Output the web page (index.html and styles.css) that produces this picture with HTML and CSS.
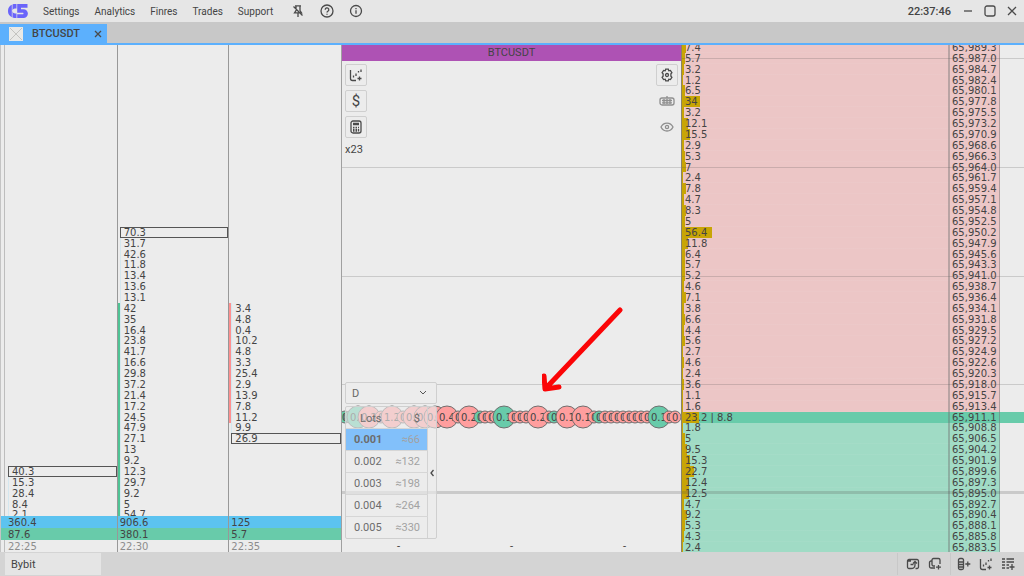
FILE: index.html
```html
<!DOCTYPE html>
<html lang="en">
<head>
<meta charset="utf-8">
<title>BTCUSDT</title>
<link rel="stylesheet" href="styles.css">
</head>
<body>
<header class="topbar">
  <svg class="logo" viewBox="0 0 20 14" width="20" height="14" aria-label="Logo">
    <path fill="#6a64fa" d="M8.500 0v4.500H7a2.500 2.500 0 0 0 0 5h1.500V14H6.500a5 5 0 0 1-2-.4V.4A6 6 0 0 1 8.500 0zM3.800 .8v12.400A6.800 6.800 0 0 1 0 7a6.800 6.800 0 0 1 3.800-6.200zM9.200 0h10.300v3.700H13v1.500h2.500a4.400 4.400 0 0 1 0 8.800H9.200v-3.700H15a.9.900 0 0 0 0-1.600H9.200z"/>
  </svg>
  <nav class="menu">
    <button>Settings</button>
    <button>Analytics</button>
    <button>Finres</button>
    <button>Trades</button>
    <button>Support</button>
  </nav>
  <div class="tools">
    <button aria-label="Unpin"><svg class="ico" viewBox="0 0 14 14" width="14" height="14"><path d="M4 1.800h6M5 2v4.500L3.500 8.800h7L9 6.500V2M7 9v4M2.500 2.500l9 9"/></svg></button>
    <button aria-label="Help"><svg class="ico" viewBox="0 0 14 14" width="14" height="14"><circle cx="7" cy="7" r="6"/><path d="M5.200 5.700a1.800 1.800 0 1 1 2.700 1.500c-.6.4-.9.700-.9 1.300M7 9.800v1"/></svg></button>
    <button aria-label="Info"><svg class="ico" viewBox="0 0 14 14" width="14" height="14"><circle cx="7" cy="7" r="5.500"/><path d="M7 6.300v3.500M7 4v1.200"/></svg></button>
  </div>
  <time class="clock">22:37:46</time>
  <div class="window-buttons">
    <button aria-label="Minimize"><svg class="ico" viewBox="0 0 12 12" width="12" height="12"><path d="M2 6h8"/></svg></button>
    <button aria-label="Maximize"><svg class="ico" viewBox="0 0 12 12" width="12" height="12"><rect x="1" y="1" width="10" height="10" rx="2"/></svg></button>
    <button aria-label="Close"><svg class="ico" viewBox="0 0 12 12" width="12" height="12"><path d="M2 2l8 8M10 2l-8 8"/></svg></button>
  </div>
</header>

<div class="tabs">
  <div class="tab">
    <svg viewBox="0 0 14 14" width="14" height="14"><rect width="14" height="14" fill="#e9e9e6"/><path d="M1 1l12 12M13 1L1 13" stroke="#c4c4c0"/></svg>
    <span>BTCUSDT</span>
    <button aria-label="Close tab"><svg class="ico" viewBox="0 0 8 8" width="8" height="8"><path d="M1 1l6 6M7 1L1 7"/></svg></button>
  </div>
</div>

<main class="workspace">
  <section class="clusters" id="clusters" aria-label="Clusters"></section>

  <section class="chart">
    <div class="rows" id="chart-rows"></div>
    <div class="chart-ui">
      <h1 class="symbol">BTCUSDT</h1>
      <div class="chart-tools">
        <div class="tool-col">
          <button class="tool boxed" aria-label="Add indicator"><svg class="ico" viewBox="0 0 14 14" width="14" height="14"><path d="M1.500 2v8.500a2 2 0 0 0 2 2H7M4.500 9.500v-2M7 8V5.500M9.500 4.500V3M12 4V1.500M10.500 8.500v4M8.500 10.500h4"/></svg></button>
          <button class="tool boxed dollar">$</button>
          <button class="tool boxed" aria-label="Calculator"><svg class="ico" viewBox="0 0 14 14" width="14" height="14"><rect x="2" y="1" width="10" height="12" rx="2"/><path d="M4 3.500h6M4 4.500h6M4 7.500h1.500M6.500 7.500H8M9 7.500h1M4 9.500h1.500M6.500 9.500H8M4 11h1.500M6.500 11H8M9.500 9v2.500"/></svg></button>
          <span class="leverage">x23</span>
        </div>
        <div class="tool-col">
          <button class="tool boxed" aria-label="Chart settings"><svg class="ico" viewBox="0 0 14 14" width="14" height="14"><path d="M5.700 1.200h2.600l.5 1.600 1.600-.4 1.500 2.300-1 1.100v2.400l1 1.100-1.500 2.300-1.600-.4-.5 1.600H5.700l-.5-1.600-1.600.4-1.500-2.300 1-1.100V5.800l-1-1.100 1.500-2.300 1.600.4z"/><circle cx="7" cy="7" r="1.500"/></svg></button>
          <button class="tool faint" aria-label="Hotkeys"><svg class="ico" viewBox="0 0 16 12" width="16" height="12"><rect x="1" y="3" width="14" height="7" rx="2"/><path d="M8 1v2M3 5.500h10M3 7.800h10M5 4v5M8 4v5M11 4v5"/></svg></button>
          <button class="tool faint" aria-label="Visibility"><svg class="ico" viewBox="0 0 16 12" width="16" height="12"><path d="M2 6c2.500-5.300 9.500-5.300 12 0-2.500 5.300-9.500 5.300-12 0z"/><circle cx="8" cy="6" r="1.600"/></svg></button>
        </div>
      </div>
      <svg class="arrow" viewBox="0 0 82 86" width="82" height="86"><path d="M78 3L4 81M2 69l1 13 14-2" fill="none" stroke="#fb0507" stroke-width="5" stroke-linecap="round" stroke-linejoin="round"/></svg>
      <div class="order-panel">
        <select class="preset" aria-label="Preset"><option>D</option></select>
        <div class="lots-box">
          <table class="lots">
            <thead><tr><th>Lots</th><th>$</th></tr></thead>
            <tbody>
              <tr class="active"><td>0.001</td><td>≈66</td></tr>
              <tr><td>0.002</td><td>≈132</td></tr>
              <tr><td>0.003</td><td>≈198</td></tr>
              <tr><td>0.004</td><td>≈264</td></tr>
              <tr><td>0.005</td><td>≈330</td></tr>
            </tbody>
          </table>
          <button class="collapse" aria-label="Collapse"><svg class="ico" viewBox="0 0 6 8" width="6" height="8"><path d="M4.500 1L2 4l2.500 3"/></svg></button>
        </div>
      </div>
      <div class="dashes"><span>-</span><span>-</span><span>-</span></div>
    </div>
  </section>

  <section class="book">
    <table class="rows" id="book-rows" aria-label="Order book"></table>
  </section>
</main>

<footer class="statusbar">
  <button class="exchange">Bybit</button>
  <div class="status-tools">
    <button aria-label="Add window"><svg class="ico" viewBox="0 0 14 14" width="14" height="14"><path d="M5 11.500H3A1.500 1.500 0 0 1 1.500 10V4A1.500 1.500 0 0 1 3 2.500h8A1.500 1.500 0 0 1 12.500 4v6a1.500 1.500 0 0 1-1.500 1.500H9.500M2 4h3M5 11.500c2.500 0 4-1 4-3.500M7 6.500l2-2 2 2M9 4.500V8M4.500 7.500h3"/></svg></button>
    <button aria-label="Add linked window"><svg class="ico" viewBox="0 0 14 14" width="14" height="14"><path d="M4 4V3a1.500 1.500 0 0 1 1.500-1.500h5A1.500 1.500 0 0 1 12 3v4M7 9H5.500A1.500 1.500 0 0 1 4 7.500V4H3a1.500 1.500 0 0 0-1.500 1.500v4A1.500 1.500 0 0 0 3 11h4M10.500 8v4.500M8 10.200h5"/></svg></button>
  </div>
  <div class="status-tools">
    <button aria-label="Add order book"><svg class="ico" viewBox="0 0 14 14" width="14" height="14"><rect x="1.500" y="1.500" width="5" height="11" rx="1.500"/><path d="M2 5h4M2 7.500h4M2 10h4M10.800 4.500v5M8.300 7h5"/></svg></button>
    <button aria-label="Add chart"><svg class="ico" viewBox="0 0 14 14" width="14" height="14"><path d="M1.500 2v8.500a2 2 0 0 0 2 2H7M4.500 9.500v-2M7 8V5.500M9.500 4.500V3M12 4V1.500M10.500 8.500v4M8.500 10.500h4"/></svg></button>
    <button aria-label="Add tape"><svg class="ico" viewBox="0 0 14 14" width="14" height="14"><path d="M1 2h3M5.500 2H13M1 5h3M5.500 5H13M1 8h3M5.500 8H8M1 11h3M5.500 11H8M11 7v6M8.500 10h5"/></svg></button>
  </div>
</footer>
<script src="app.js"></script>
</body>
</html>
```
FILE: styles.css
```css
* { box-sizing: border-box; }
body {
  margin: 0;
  min-height: 100vh;
  display: flex;
  flex-direction: column;
  background: #ececec;
  color: #444;
  font-family: Roboto, "Liberation Sans", sans-serif;
  font-size: 11px;
}
button {
  border: 0;
  padding: 0;
  background: none;
  color: inherit;
  font: inherit;
  display: inline-flex;
  align-items: center;
  justify-content: center;
}
.ico { fill: none; stroke: #4a4a4a; stroke-width: 1.3; display: block; }

.topbar {
  height: 22px;
  display: flex;
  align-items: center;
  padding: 0 6px 0 8px;
  background: #e6e6e6;
}
.menu { display: flex; gap: 15px; margin-left: 15px; font-size: 10px; }
.tools { display: flex; gap: 15px; margin-left: 18px; }
.clock { margin-left: auto; font-weight: 500; }
.window-buttons { display: flex; gap: 10px; margin-left: 11px; }

.tabs {
  height: 23px;
  display: flex;
  background: #c8c8c8;
  border-bottom: 2px solid #5cb0fd;
  padding-top: 2px;
}
.tab {
  display: flex;
  align-items: center;
  gap: 9px;
  padding: 0 5px 0 9px;
  background: #5cb0fd;
  font-weight: 500;
}
.tab button { margin-left: 5px; width: 8px; }

.workspace {
  flex: 1;
  display: grid;
  grid-template-columns: 341fr 340fr 343fr;
  min-height: 480px;
}
.workspace > section { position: relative; min-width: 0; overflow: hidden; }

.rows {
  position: absolute;
  inset: -3px 0 -1px;
  display: grid;
  grid-template-columns: minmax(0, 1fr);
  grid-template-rows: repeat(47, minmax(0, 1fr));
  font-family: "DejaVu Sans", sans-serif;
  font-size: 10px;
}
.row { position: relative; display: flex; align-items: center; white-space: nowrap; }
.row.line::after {
  content: "";
  position: absolute;
  inset: 50% 0 auto;
  height: 1px;
  background: rgba(80, 80, 80, .22);
}
.row.line.thick::after { inset: calc(50% - 2px) 0 auto; height: 3px; background: rgba(80, 80, 80, .22); }

.clusters {
  display: grid;
  grid-template-columns: repeat(3, minmax(0, 1fr));
  padding-left: 6px;
  background: linear-gradient(to right, #c4c4c4 1px, #ececec 1px, #ececec 4px, #bdbdbd 4px, #bdbdbd 5px, #ececec 5px);
}
.clusters::after {
  content: "";
  position: absolute;
  inset: auto auto 12px 1px;
  width: 5px;
  height: 24px;
  background: linear-gradient(#5cc3f0 50%, #68cbaa 50%);
}
.cluster { position: relative; border-right: 1px solid #989898; overflow: hidden; }
.cluster:last-child { border-right: 0; }
.cluster-row { display: flex; align-items: center; }
.cluster-row.empty { visibility: hidden; }
.cluster-row::before { content: ""; align-self: stretch; width: 2px; flex: none; }
.cluster-row.up::before { background: #4fc394; }
.cluster-row.down::before { background: #ff9090; }
.cluster-value {
  flex: 1;
  align-self: stretch;
  display: flex;
  align-items: center;
  padding-left: 3px;
  border-left: 1px solid #d4e7ef;
}
.cluster-row.peak .cluster-value { border: 1px solid #555; }
.cluster-foot {
  position: absolute;
  inset: auto 0 0;
  background: #ececec;
  font: 10px/14px "DejaVu Sans", sans-serif;
}
.cluster-foot div { height: 12px; padding-left: 2px; }
.total { background: #5cc3f0; }
.delta { background: #68cbaa; }
.stamp { color: #8c8c8c; }

.chart { border-left: 1px solid #a0a0a0; }
.chart-ui { position: relative; height: 100%; display: flex; flex-direction: column; }
.symbol {
  margin: 0;
  font-size: 11px;
  font-weight: 400;
  line-height: 16px;
  text-align: center;
  background: #ae52b4;
}
.chart-tools { display: flex; justify-content: space-between; padding: 3px 3px 0; }
.tool-col { display: flex; flex-direction: column; gap: 4px; }
.tool { width: 22px; height: 22px; }
.tool.boxed { border: 1px solid #cfcfcf; border-radius: 2px; }
.tool.faint .ico { stroke: #8e8e8e; }
.dollar { font-size: 15px; }
.leverage { line-height: 16px; }
.bubbles { display: block; flex: none; overflow: visible; }
.bubbles circle { stroke: #6f6f6f; stroke-width: 1; fill: #ff9e9e; }
.bubbles .buy { fill: #68cbaa; }
.bubbles text { fill: #444; font-size: 10px; }
.arrow { position: absolute; left: 59%; top: 262px; }

.order-panel { margin: auto 0 1px 3px; width: 92px; color: #6c6c6c; }
.preset {
  appearance: none;
  display: block;
  width: 100%;
  height: 22px;
  margin-bottom: 2px;
  padding: 0 6px;
  border: 1px solid #cfcfcf;
  border-radius: 2px;
  color: #666;
  font: inherit;
  background: #ececec url("data:image/svg+xml,%3Csvg xmlns='http://www.w3.org/2000/svg' width='8' height='6'%3E%3Cpath d='M1 1l3 3 3-3' fill='none' stroke='%23555'/%3E%3C/svg%3E") no-repeat right 9px center;
}
.lots-box {
  display: flex;
  border: 1px solid #cfcfcf;
  border-radius: 2px;
  background: rgba(236, 236, 236, .62);
}
.lots { flex: 1; border-collapse: collapse; border-right: 1px solid #d2d2d2; }
.lots th, .lots td { height: 22px; padding: 2px 7px 0 8px; border-bottom: 1px solid #d6d6d6; line-height: 16px; }
.lots th { font-weight: 400; padding: 4px 7px 0 14px; text-align: left; height: 21px; }
.lots td:last-child, .lots th:last-child { text-align: right; padding-left: 0; }
.lots td:last-child { color: #a2a2a2; }
.lots tr:last-child td { border-bottom: 0; }
.lots .active { background: #82c0fa; }
.lots .active td:first-child { font-weight: 700; }
.collapse { width: 8px; }
.dashes {
  display: flex;
  justify-content: space-around;
  font: 10px/12px "DejaVu Sans", sans-serif;
}

.book { border-left: 1px solid #8c8468; }
.book tbody { display: contents; }
.book .row { background: linear-gradient(#ecc6c6, #ecc6c6) no-repeat left / calc(100% - 24px) 100%; }
.book .row.bid { background-image: linear-gradient(#a0dbc5, #a0dbc5); }
.book .row.last { background: #68cbaa; }
.volume { position: relative; flex: 1; align-self: stretch; padding: 0 0 0 3px; display: flex; align-items: center; border-right: 2px solid rgba(110, 110, 110, .4); }
.volume i { position: absolute; inset: 0 auto 0 0; background: #c8a505; }
.volume span { position: relative; }
.price { align-self: stretch; display: flex; align-items: center; width: 50px; padding: 0 0 0 2px; border-right: 1px solid rgba(110, 110, 110, .45); margin-right: 24px; }

.statusbar { height: 24px; display: flex; align-items: center; background: #d4d4d4; padding: 1px 6px 1px 5px; }
.exchange { width: 96px; align-self: stretch; justify-content: flex-start; padding-left: 6px; background: #e5e5e5; margin-right: auto; }
.status-tools { display: flex; gap: 8px; padding: 0 8px; align-self: stretch; align-items: center; border-left: 1px solid #c8c8c8; }
.status-tools:last-child { padding: 0 3px 0 6px; }
```
FILE: app.js
```js
const ROWS = 47;
const TOP_PRICE = 65989.3;
const STEP = 2.3;
const LAST = 34;

const volumes = [7.4, 5.7, 3.2, 1.2, 6.5, 34, 3.2, 12.1, 15.5, 2.9, 5.3, 7, 2.4, 7.8, 4.7, 8.3, 5,
  56.4, 11.8, 6.4, 5.7, 5.2, 4.6, 7.1, 3.8, 6.6, 4.4, 5.6, 2.7, 4.6, 2.4, 3.6, 1.1, 1.6, "23.2 | 8.8",
  1.8, 5, 9.5, 15.3, 22.7, 12.4, 12.5, 4.7, 9.2, 5.3, 4.3, 2.4];

const clusters = [
  { time: "22:25", total: "360.4", delta: "87.6", start: 39, peak: 39,
    values: [40.3, 15.3, 28.4, 8.4, 2.1] },
  { time: "22:30", total: "906.6", delta: "380.1", start: 17, peak: 17, side: "up", from: 24, to: 44,
    values: [70.3, 31.7, 42.6, 11.8, 13.4, 13.6, 13.1, 42, 35, 16.4, 23.8, 41.7, 16.6, 29.8, 37.2,
      21.4, 17.2, 24.5, 47.9, 27.1, 13, 9.2, 12.3, 29.7, 9.2, 5, 54.7] },
  { time: "22:35", total: "125", delta: "5.7", start: 24, peak: 36, side: "down", from: 24, to: 34,
    values: [3.4, 4.8, 0.4, 10.2, 4.8, 3.3, 25.4, 2.9, 13.9, 7.8, 11.2, 9.9, 26.9] }
];

// [x, label, buy]
const trades = [[3, "0", 1], [8, "0", 1], [16, "0.2", 1], [27, "0.2"], [39, "0"], [50, "1.2"], [61, "0"], [72, "0.2"],
  [83, "0.1"], [93, "0.1"], [105, "0.4"], [116, "0"], [127, "0.2"], [138, "0", 1], [143, "0"], [149, "0"], [154, "0"],
  [162, "0.1", 1], [172, "0"], [178, "0"], [184, "0"], [196, "0.2"], [207, "0"], [212, "0", 1], [225, "0.1"],
  [241, "0.1"], [252, "0"], [257, "0", 1], [263, "0"], [269, "0"], [275, "0"], [281, "0"], [287, "0"], [293, "0"],
  [299, "0"], [305, "0"], [317, "0.1", 1], [327, "0"], [333, "0"]];

const lineClass = i => (i % 10 === 1 ? " line" : "") + (i === 41 ? " thick" : "");

document.getElementById("clusters").innerHTML = clusters.map(c => {
  let rows = "";
  for (let i = 0; i < ROWS; i++) {
    const value = c.values[i - c.start];
    if (value === undefined) {
      rows += '<div class="cluster-row empty"></div>';
      continue;
    }
    const side = c.side && i >= c.from && i <= c.to ? " " + c.side : "";
    rows += `<div class="cluster-row${side}${i === c.peak ? " peak" : ""}"><span class="cluster-value">${value}</span></div>`;
  }
  return `<div class="cluster"><div class="rows">${rows}</div><div class="cluster-foot">
    <div class="total">${c.total}</div><div class="delta">${c.delta}</div><div class="stamp">${c.time}</div></div></div>`;
}).join("");

const bubbles = trades.map(([x, label, buy]) => {
  const big = label.length > 1;
  return `<circle cx="${x}" cy="12" r="${big ? 11 : 6}"${buy ? ' class="buy"' : ""}/><text x="${x - (big ? 8 : 3)}" y="16">${label}</text>`;
}).join("");

let chartRows = "";
for (let i = 0; i < ROWS; i++) {
  chartRows += `<div class="row${lineClass(i)}">${i === LAST
    ? `<svg class="bubbles" width="339" height="24" viewBox="0 0 339 24">${bubbles}</svg>` : ""}</div>`;
}
document.getElementById("chart-rows").innerHTML = chartRows;

document.getElementById("book-rows").innerHTML = "<tbody>" + volumes.map((v, i) => {
  const size = i === LAST ? 32 : v;
  const price = (TOP_PRICE - STEP * i).toLocaleString("en-US", { minimumFractionDigits: 1, maximumFractionDigits: 1 });
  const side = i === LAST ? " last" : i > LAST ? " bid" : "";
  return `<tr class="row${side}${lineClass(i)}"><td class="volume"><i style="width:${Math.max(1, Math.round(size * 0.53))}px"></i><span>${v}</span></td><td class="price">${price}</td></tr>`;
}).join("") + "</tbody>";
```
